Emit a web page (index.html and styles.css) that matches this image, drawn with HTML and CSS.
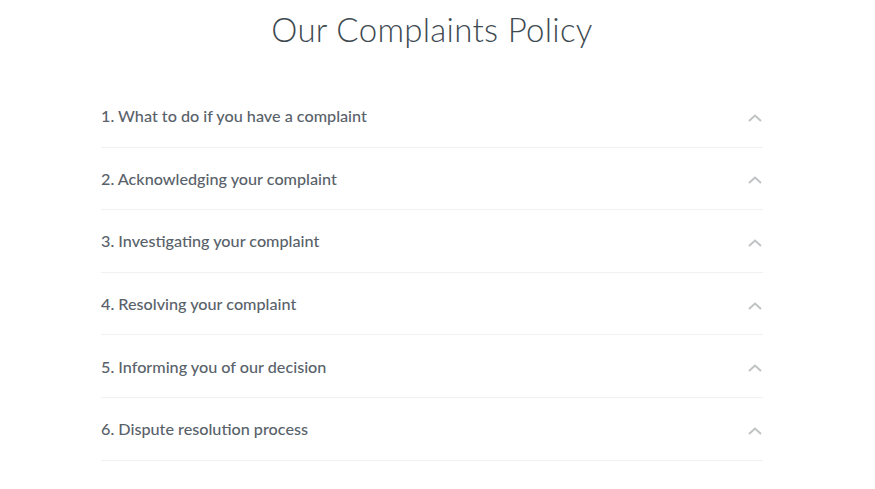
FILE: index.html
```html
<!DOCTYPE html>
<html lang="en">
<head>
<meta charset="utf-8">
<title>Our Complaints Policy</title>
<link rel="stylesheet" href="styles.css">
</head>
<body>
<main class="page">
  <h1 class="title">Our Complaints Policy</h1>
  <ul class="accordion">
    <li class="item"><span class="label">1. What to do if you have a complaint</span><svg class="chev" viewBox="0 0 14 8" width="14" height="8"><path d="M1 7 L7 1.5 L13 7" fill="none" stroke="#c0c3c4" stroke-width="2"/></svg></li>
    <li class="item"><span class="label">2. Acknowledging your complaint</span><svg class="chev" viewBox="0 0 14 8" width="14" height="8"><path d="M1 7 L7 1.5 L13 7" fill="none" stroke="#c0c3c4" stroke-width="2"/></svg></li>
    <li class="item"><span class="label">3. Investigating your complaint</span><svg class="chev" viewBox="0 0 14 8" width="14" height="8"><path d="M1 7 L7 1.5 L13 7" fill="none" stroke="#c0c3c4" stroke-width="2"/></svg></li>
    <li class="item"><span class="label">4. Resolving your complaint</span><svg class="chev" viewBox="0 0 14 8" width="14" height="8"><path d="M1 7 L7 1.5 L13 7" fill="none" stroke="#c0c3c4" stroke-width="2"/></svg></li>
    <li class="item"><span class="label">5. Informing you of our decision</span><svg class="chev" viewBox="0 0 14 8" width="14" height="8"><path d="M1 7 L7 1.5 L13 7" fill="none" stroke="#c0c3c4" stroke-width="2"/></svg></li>
    <li class="item"><span class="label">6. Dispute resolution process</span><svg class="chev" viewBox="0 0 14 8" width="14" height="8"><path d="M1 7 L7 1.5 L13 7" fill="none" stroke="#c0c3c4" stroke-width="2"/></svg></li>
  </ul>
</main>
</body>
</html>
```
FILE: styles.css
```css
html, body {
  margin: 0;
  padding: 0;
  background: #ffffff;
}
.page {
  width: 662px;
  margin: 0 0 0 101px;
  font-family: "Lato", "Open Sans", sans-serif;
}
.title {
  margin: 0;
  height: 85px;
  padding-top: 9px;
  box-sizing: border-box;
  text-align: center;
  font-size: 33px;
  line-height: 40px;
  font-weight: 300;
  color: #3e4a51;
  letter-spacing: 0.3px;
}
.accordion {
  list-style: none;
  margin: 0;
  padding: 0;
}
.item {
  height: 61.6px;
  border-bottom: 1px solid #f1f1f1;
  display: flex;
  align-items: center;
  justify-content: space-between;
}
.label {
  font-size: 16.2px;
  font-weight: 500;
  color: #59626a;
}
.chev {
  margin-right: 1px;
  margin-top: 4px;
}
```
